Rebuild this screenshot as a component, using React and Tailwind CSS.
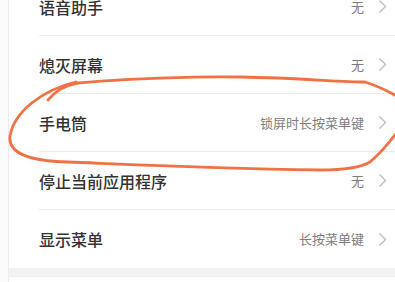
import React from 'react';

const rows = [
    { label: '语音助手', value: '无' },
    { label: '熄灭屏幕', value: '无' },
    { label: '手电筒', value: '锁屏时长按菜单键' },
    { label: '停止当前应用程序', value: '无' },
    { label: '显示菜单', value: '长按菜单键' },
];

const Chevron = () => (
    <svg width="9" height="15" viewBox="0 0 9 15" fill="none" className="ml-[14px]">
        <path d="M1.5 1.5 L7.5 7.5 L1.5 13.5" stroke="#bdbdbd" strokeWidth="1.4" />
    </svg>
);

const App = () => {
    return (
        <div
            className="relative w-[395px] h-[282px] overflow-hidden bg-white"
            style={{ fontFamily: '"Noto Sans CJK SC", "Noto Sans", sans-serif' }}
        >
            <div className="flex h-full">
                <div className="w-[9px] shrink-0 border-r border-[#ececec] bg-[#fbfbfb]" />
                <div className="flex-1 flex flex-col">
                    <div className="mt-[-22px] bg-white">
                        {rows.map((row, idx) => (
                            <div key={idx} className="pl-[30px]">
                                <div
                                    className={`h-[58px] flex items-center pr-[8px] ${idx < rows.length - 1 ? 'border-b border-[#ebebeb]' : ''}`}
                                >
                                    <span className="text-[16px] font-medium text-[#333333] flex-1">{row.label}</span>
                                    <span className="text-[13px] text-[#7d7d7d]">{row.value}</span>
                                    <Chevron />
                                </div>
                            </div>
                        ))}
                    </div>
                    <div className="h-[8px] bg-[#f2f2f2]" />
                    <div className="flex-1 border-t border-[#ececec] bg-white" />
                </div>
            </div>

            {/* hand-drawn circle over the flashlight row */}
            <svg className="absolute inset-0 pointer-events-none" width="395" height="282" viewBox="0 0 395 282" fill="none">
                <path
                    d="M48 100 C 55 92 62 86 78 83 C 120 79 200 76 240 77 C 300 78 340 82 365 82 C 378 86 388 91 400 98"
                    stroke="#f07244"
                    strokeWidth="2.8"
                    strokeLinecap="round"
                />
                <path
                    d="M76 82 C 42 90 14 112 10 136 C 8 152 26 161 68 162 C 120 164 200 168 320 170 C 345 170 360 168 370 162 C 382 152 390 142 400 128"
                    stroke="#f07244"
                    strokeWidth="2.8"
                    strokeLinecap="round"
                />
            </svg>
        </div>
    );
};

export default App;
